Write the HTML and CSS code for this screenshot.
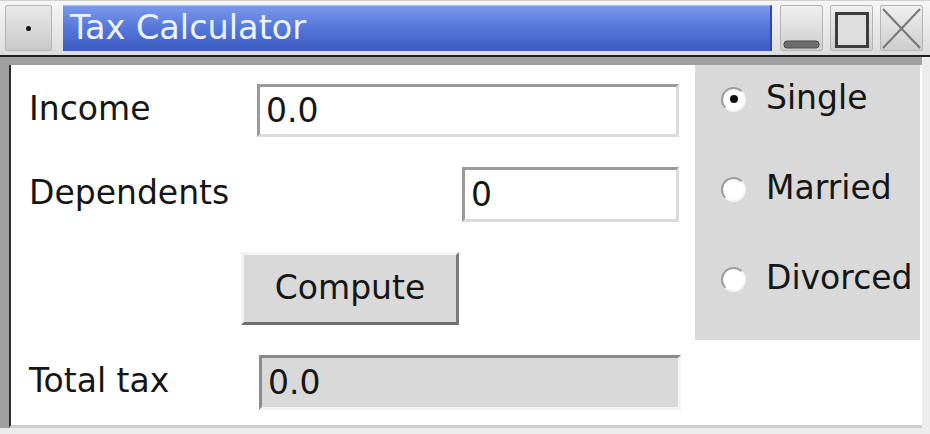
FILE: index.html
```html
<!DOCTYPE html>
<html>
<head>
<meta charset="utf-8">
<title>Tax Calculator</title>
<link rel="stylesheet" href="styles.css">
</head>
<body>
<div class="window">
  <div class="titlebar">
    <div class="tb-btn menu-btn"><span class="dot"></span></div>
    <div class="title">Tax Calculator</div>
    <div class="tb-btn">
      <svg width="43" height="46" viewBox="0 0 43 46"><rect x="4" y="36" width="35" height="7" rx="3" fill="#6e6e6e" stroke="#4a4a4a" stroke-width="1"/></svg>
    </div>
    <div class="tb-btn">
      <svg width="43" height="46" viewBox="0 0 43 46"><rect x="6.5" y="8.5" width="31" height="33" fill="#dedede" stroke="#3c3c3c" stroke-width="3"/></svg>
    </div>
    <div class="tb-btn">
      <svg width="43" height="46" viewBox="0 0 43 46"><path d="M3 4 L40 43 M40 4 L3 43" stroke="#767676" stroke-width="2" fill="none"/></svg>
    </div>
  </div>
  <div class="frame">
    <div class="frame-inner">
      <div class="content">
        <div class="form">
          <div class="label">Income</div>
          <div class="entry wide">0.0</div>
          <div class="label">Dependents</div>
          <div class="entry narrow">0</div>
          <div></div>
          <div class="button">Compute</div>
          <div class="label">Total tax</div>
          <div class="entry wide readonly">0.0</div>
        </div>
        <div class="radios">
          <div class="radio-item"><span class="radio checked"></span><span>Single</span></div>
          <div class="radio-item"><span class="radio"></span><span>Married</span></div>
          <div class="radio-item"><span class="radio"></span><span>Divorced</span></div>
        </div>
      </div>
    </div>
  </div>
</div>
</body>
</html>
```

FILE: styles.css
```css
* { box-sizing: border-box; }
html, body { margin: 0; padding: 0; }
body {
  width: 930px;
  height: 434px;
  overflow: hidden;
  font-family: "DejaVu Sans", "Liberation Sans", sans-serif;
  color: #151515;
}
.window {
  width: 930px;
  height: 434px;
  display: flex;
  flex-direction: column;
  background: #ececec;
}
.titlebar {
  height: 55px;
  flex: none;
  display: flex;
  align-items: flex-start;
  padding: 4px 5px 0 5px;
  background: linear-gradient(#f6f6f6, #dcdcdc);
  border-top: 1px solid #cfcfcf;
}
.tb-btn {
  width: 43px;
  height: 46px;
  margin-left: 7px;
  background: linear-gradient(#efefef, #cdcdcd);
  border: 1px solid #b5b5b5;
  border-radius: 2px;
  display: flex;
  align-items: center;
  justify-content: center;
  overflow: hidden;
}
.tb-btn svg { display: block; flex: none; }
.menu-btn {
  width: 47px;
  margin-left: 0;
  background: linear-gradient(#e9e9e9, #c9c9c9);
}
.dot {
  width: 5px;
  height: 5px;
  border-radius: 50%;
  background: #111;
}
.title {
  width: 709px;
  height: 46px;
  margin-left: 11px;
  margin-right: 1px;
  padding-left: 7px;
  display: flex;
  align-items: center;
  padding-bottom: 3px;
  background: linear-gradient(#7a98ec, #5273d8 55%, #3d5bc0);
  border-top: 1px solid #a9bdf2;
  border-right: 2px solid #2f4aa6;
  color: #eef2ff;
  font-size: 33.5px;
  white-space: nowrap;
}
.frame {
  flex: 1;
  display: flex;
  flex-direction: column;
  border-top: 2px solid #1e1e1e;
}
.frame-inner {
  flex: 1;
  display: flex;
  margin: 0 8px 6px 0;
  padding: 8px 0 0 9px;
  background: #a0a0a0;
}
.content {
  flex: 1;
  display: flex;
  align-items: flex-start;
  background: #ffffff;
  border-left: 2px solid #2c2c2c;
  border-bottom: 3px solid #cdcdcd;
}
.form {
  width: 684px;
  flex: none;
  display: grid;
  grid-template-columns: 228px 422px;
  grid-template-rows: 53px 55px 73px 55px;
  row-gap: 30px;
  padding: 19px 0 0 18px;
  font-size: 33px;
}
.label {
  display: flex;
  align-items: center;
  padding-bottom: 4px;
}
.entry {
  display: flex;
  align-items: center;
  padding-left: 6px;
  background: #fff;
  border: 3px solid;
  border-color: #9a9a9a #dcdcdc #dcdcdc #9a9a9a;
}
.entry.narrow {
  width: 217px;
  justify-self: end;
}
.entry.readonly {
  margin-left: 2px;
  margin-right: -2px;
  background: #d9d9d9;
  border-color: #8c8c8c #f4f4f4 #f4f4f4 #8c8c8c;
}
.button {
  width: 218px;
  margin-left: -16px;
  display: flex;
  align-items: center;
  justify-content: center;
  padding-bottom: 2px;
  background: #d9d9d9;
  border: 3px solid;
  border-color: #f3f3f3 #7a7a7a #6e6e6e #f3f3f3;
}
.radios {
  width: 225px;
  height: 275px;
  flex: none;
  background: #d9d9d9;
  display: flex;
  flex-direction: column;
  gap: 40px;
  padding: 7px 0 0 26px;
  font-size: 33px;
}
.radio-item {
  height: 50px;
  display: flex;
  align-items: center;
  white-space: nowrap;
}
.radio {
  width: 25px;
  height: 25px;
  flex: none;
  margin: 4px 20px 0 0;
  border-radius: 50%;
  background: #fff;
  border: 2px solid;
  border-color: #9c9c9c #f6f6f6 #f6f6f6 #9c9c9c;
  display: flex;
  align-items: center;
  justify-content: center;
}
.radio.checked::after {
  content: "";
  width: 8px;
  height: 8px;
  border-radius: 50%;
  background: #111;
}
```
